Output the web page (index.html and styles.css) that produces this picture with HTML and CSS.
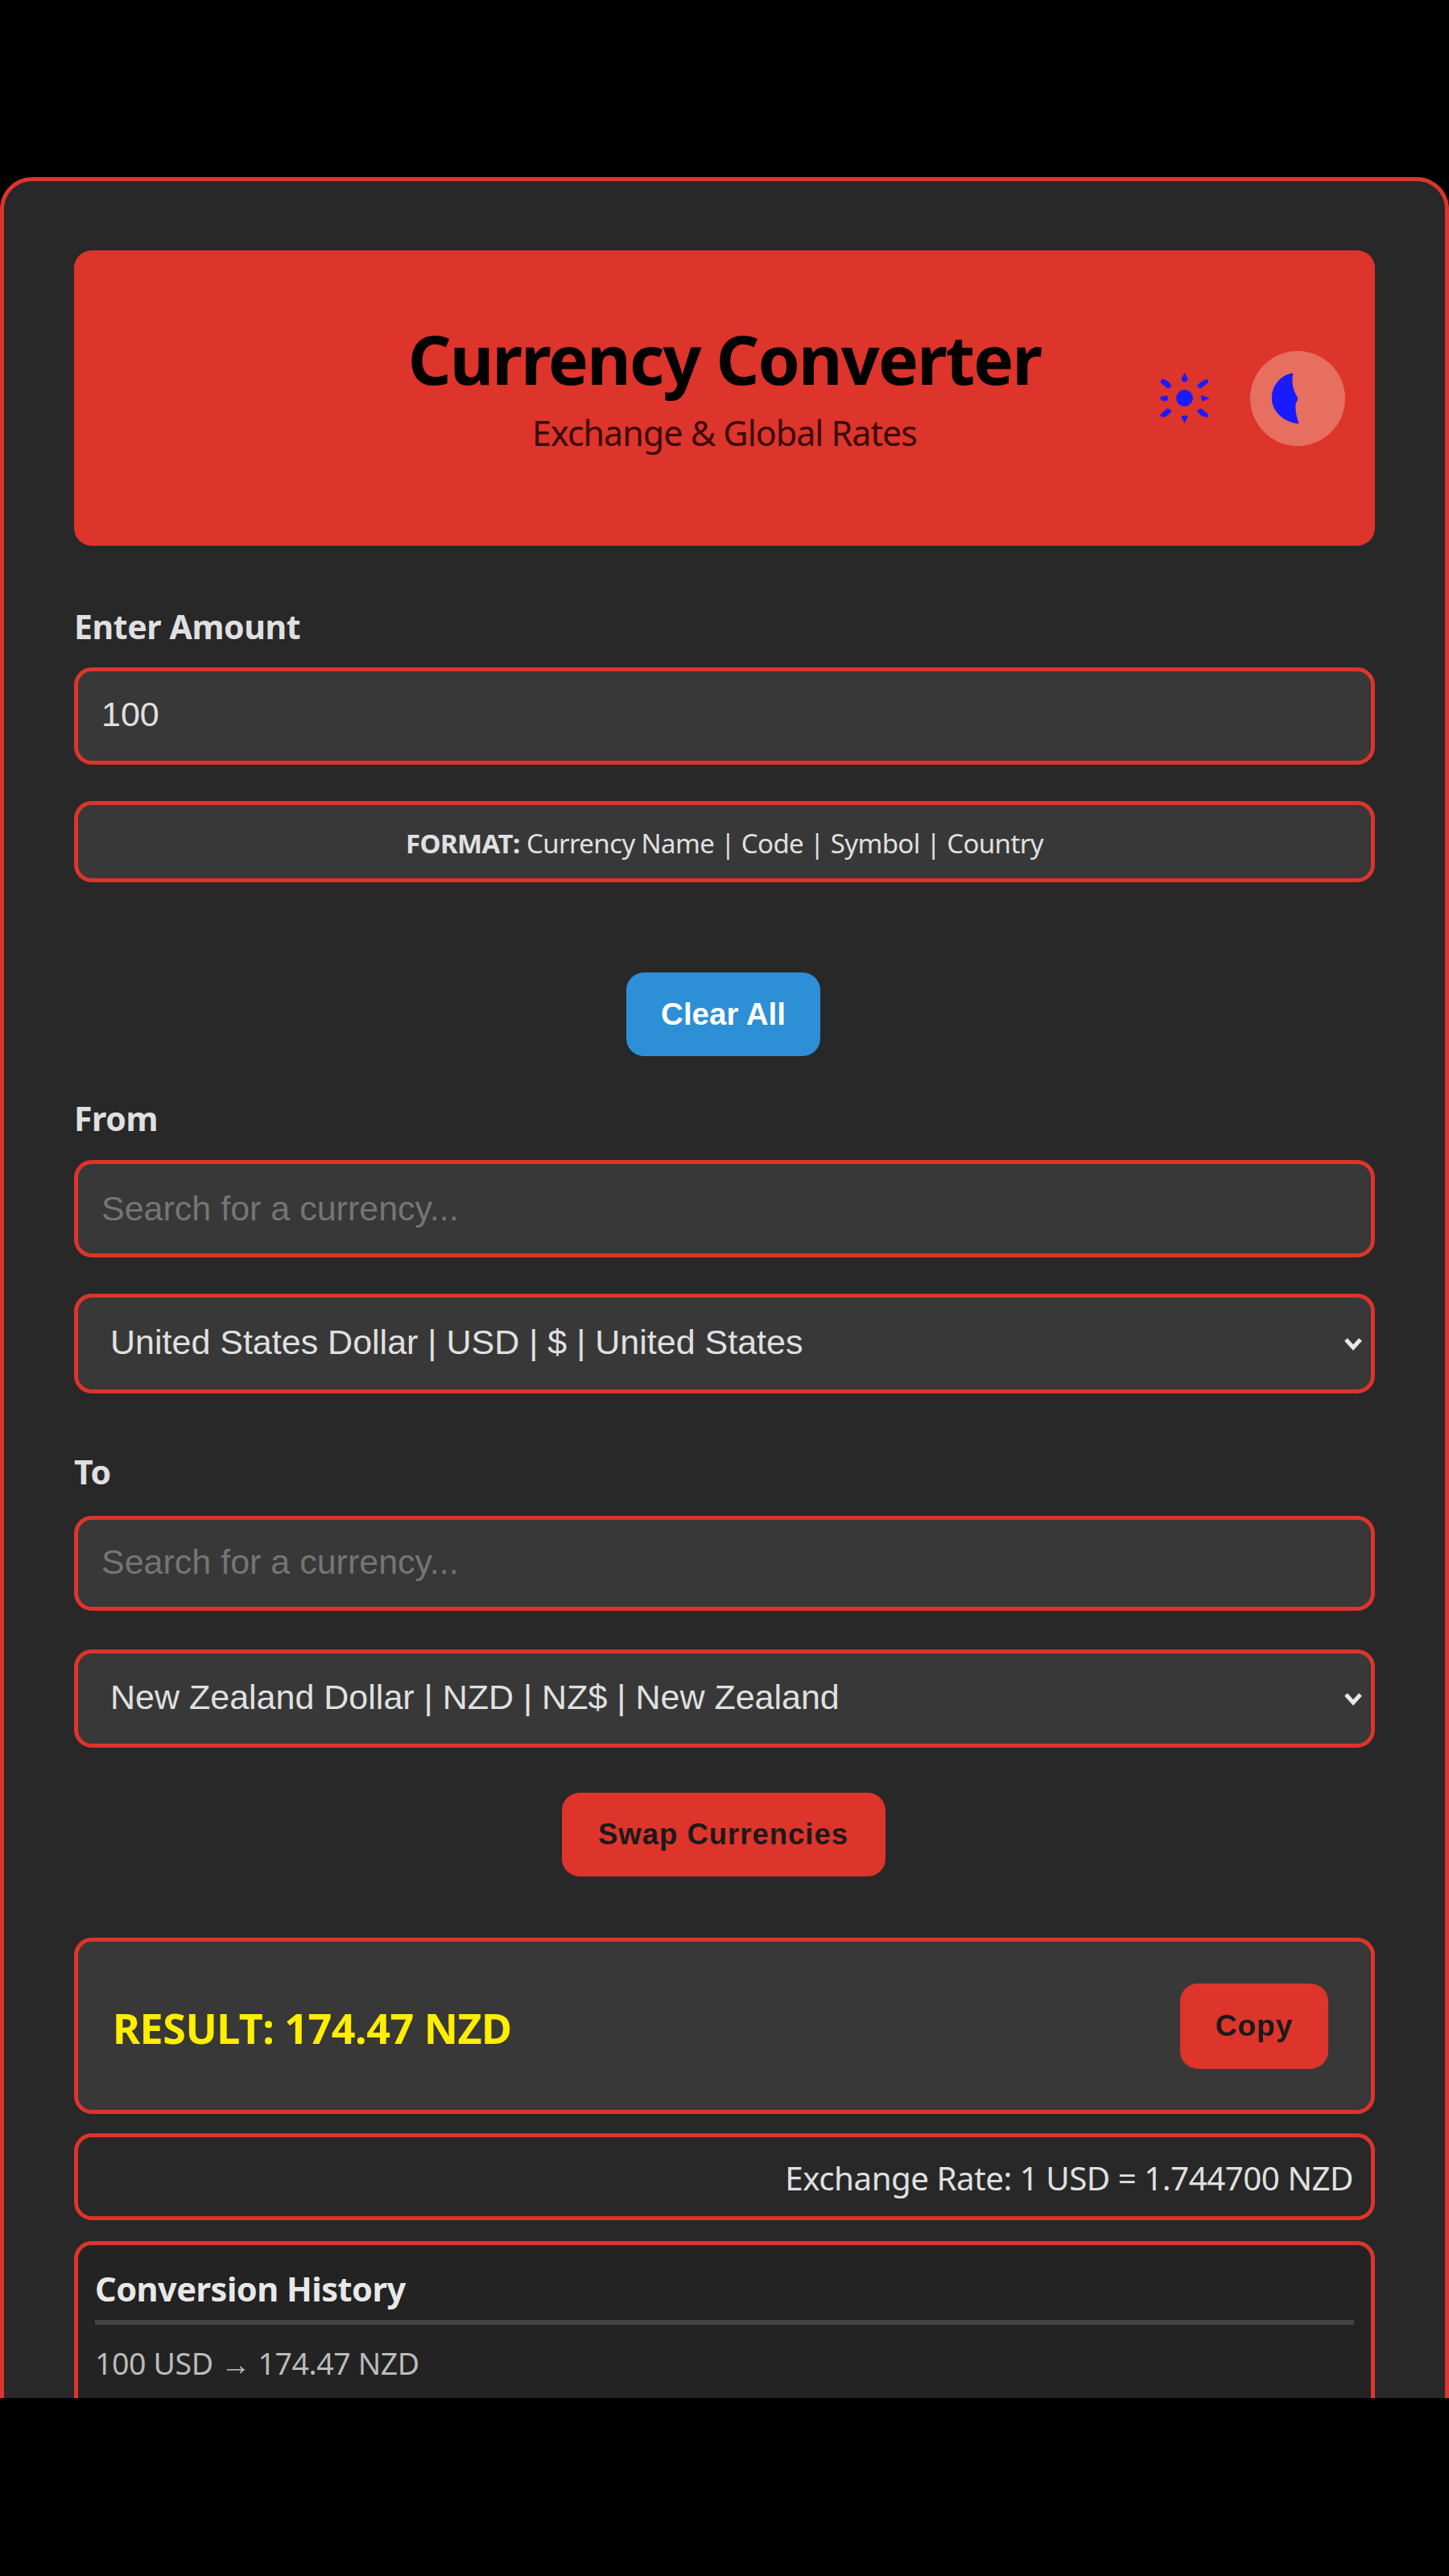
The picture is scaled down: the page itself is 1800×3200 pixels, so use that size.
FILE: index.html
```html
<!DOCTYPE html>
<html lang="en">
<head>
    <meta charset="UTF-8">
    <title>Currency Converter</title>
    <link rel="stylesheet" href="styles.css">
</head>
<body>
    <div class="frame">
        <div class="container">
            <div class="header">
                <div class="header-text">
                    <h1 class="title">Currency Converter</h1>
                    <div class="subtitle">Exchange &amp; Global Rates</div>
                </div>
                <div class="theme-controls">
                    <svg class="sun-icon" viewBox="183 188 182 188" aria-hidden="true">
                        <circle cx="274" cy="282" r="30"/>
                        <path d="M274 190 L285 210 Q283 221 274 222 Q264 221 263 210 Z"/>
                        <path d="M358 213 Q364 218 361 223 L336 245 Q326 245 322 236 Q332 220 358 213 Z"/>
                        <path d="M337 273 L365 283 L340 293 Q335 283 337 273 Z"/>
                        <path d="M322 330 Q328 322 337 322 L362 344 Q362 352 355 352 Q332 350 322 330 Z"/>
                        <path d="M263 350 Q274 344 285 350 L274 374 Z"/>
                        <path d="M225 330 Q215 350 192 352 Q184 350 185 344 L208 322 Q220 322 225 330 Z"/>
                        <path d="M185 278 L210 274 Q213 283 210 291 L192 292 Q184 285 185 278 Z"/>
                        <path d="M225 235 Q220 245 210 245 L186 224 Q184 216 194 212 Q216 220 225 235 Z"/>
                    </svg>
                    <button class="theme-toggle" aria-label="Toggle theme">
                        <svg class="moon-icon" viewBox="517 105 356 356" aria-hidden="true">
                            <path d="M672 188 C630 198 598 235 598 282 C598 330 640 372 700 378 C690 350 685 325 688 300 Q698 288 694 278 C680 255 670 225 678 190 Z"/>
                        </svg>
                    </button>
                </div>
            </div>

            <label class="field-label label-amount">Enter Amount</label>
            <input class="field field-amount" type="text" value="100">
            <div class="format-note"><b>FORMAT:</b> Currency Name | Code | Symbol | Country</div>

            <div class="btn-row row-clear"><button class="btn btn-clear">Clear All</button></div>

            <label class="field-label label-from">From</label>
            <input class="field" type="text" placeholder="Search for a currency...">
            <select class="field field-select">
                <option>United States Dollar | USD | $ | United States</option>
            </select>

            <label class="field-label label-to">To</label>
            <input class="field field-short" type="text" placeholder="Search for a currency...">
            <select class="field field-select field-select-short">
                <option>New Zealand Dollar | NZD | NZ$ | New Zealand</option>
            </select>

            <div class="btn-row row-swap"><button class="btn btn-swap">Swap Currencies</button></div>

            <div class="result-box">
                <div class="result-text">RESULT: 174.47 NZD</div>
                <button class="btn btn-copy">Copy</button>
            </div>
            <div class="rate-box">Exchange Rate: 1 USD = 1.744700 NZD</div>

            <div class="history">
                <div class="history-title">Conversion History</div>
                <div class="history-item">100 USD → 174.47 NZD</div>
            </div>
        </div>
    </div>
</body>
</html>
```

FILE: styles.css
```css
* { box-sizing: border-box; }
html, body { background: #000; }
body { margin: 0; height: 3200px; overflow: hidden; font-family: "Noto Sans", sans-serif; color: #e0e0e0; }

.frame { margin-top: 220px; height: 2759px; overflow: hidden; }
.container { background: #282828; border: 5px solid #dd342c; border-radius: 40px; padding: 86px 87px 60px; min-height: 3000px; }

.header { display: flex; height: 367px; background: #dd342c; border-radius: 22px; position: relative; align-items: center; justify-content: center; }
.header-text { text-align: center; margin-top: -28px; }
.title { margin: 0; font-size: 84px; line-height: 100px; font-weight: 700; color: #000; letter-spacing: -1.9px; }
.subtitle { font-size: 43px; line-height: 56px; color: #3a0a08; margin-top: 14px; letter-spacing: -1px; }
.theme-controls { position: absolute; right: 37px; top: 0; bottom: 0; display: flex; align-items: center; gap: 51px; }
.sun-icon { width: 61px; height: 63px; fill: #1a1aff; stroke: #1a1aff; stroke-width: 2; }
.theme-toggle { width: 118px; height: 118px; padding: 0; border: none; border-radius: 50%; background: #e66f60; }
.moon-icon { display: block; width: 118px; height: 118px; fill: #1a1aff; }

.field-label { display: block; font-size: 41px; line-height: 54px; font-weight: 700; color: #e0e0e0; letter-spacing: -0.4px; }
.label-amount { margin-top: 73px; margin-bottom: 24px; }
.label-from { margin-top: 50px; margin-bottom: 25px; }
.label-to { margin-top: 70px; margin-bottom: 28px; }

.field { display: block; width: 100%; height: 121px; padding: 0 29px; background: #383838; border: 5px solid #dd342c; border-radius: 22px; font-family: "Liberation Sans", Arial, sans-serif; font-size: 43px; color: #e0e0e0; outline: none; }
.field::placeholder { color: #757575; }
.field-amount { padding-bottom: 4px; }
.field-short { height: 118px; padding-bottom: 3px; }
.field-select { margin-top: 45px; height: 124px; padding: 0 40px 4px; appearance: none; background-image: url("data:image/svg+xml,%3Csvg xmlns='http://www.w3.org/2000/svg' width='24' height='18'%3E%3Cpath d='M3 4 L12 14 L21 4' fill='none' stroke='%23e8e8e8' stroke-width='5'/%3E%3C/svg%3E"); background-repeat: no-repeat; background-position: right 10px center; }
.field-select-short { margin-top: 48px; height: 122px; }

.format-note { margin-top: 45px; height: 101px; display: flex; align-items: center; justify-content: center; gap: 0.25em; padding-top: 3px; background: #383838; border: 5px solid #dd342c; border-radius: 22px; font-size: 33px; letter-spacing: -0.6px; color: #e0e0e0; }

.btn-row { display: flex; justify-content: center; padding-right: 3px; }
.row-clear { margin-top: 112px; }
.row-swap { margin-top: 56px; }
.btn { border: none; border-radius: 22px; font-family: "Liberation Sans", Arial, sans-serif; font-weight: 700; cursor: pointer; }
.btn-clear { width: 241px; height: 104px; background: #2d8fd5; color: #fff; font-size: 38.5px; }
.btn-swap { width: 402px; height: 104px; background: #dd342c; color: #1a1a1a; font-size: 36.5px; letter-spacing: 1px; }
.btn-copy { width: 184px; height: 106px; background: #dd342c; color: #1a1a1a; font-size: 37px; letter-spacing: 1px; }

.result-box { margin-top: 76px; height: 219px; display: flex; align-items: center; justify-content: space-between; padding: 0 53px 0 43px; background: #383838; border: 5px solid #dd342c; border-radius: 22px; }
.result-text { font-size: 52px; font-weight: 700; color: #ffee00; letter-spacing: -0.5px; margin-top: 4px; }
.rate-box { margin-top: 24px; height: 108px; display: flex; align-items: center; justify-content: flex-end; padding: 2px 22px 0; border: 5px solid #dd342c; border-radius: 22px; font-size: 40.3px; letter-spacing: -0.5px; color: #e0e0e0; }

.history { margin-top: 26px; height: 400px; background: #232323; border: 5px solid #dd342c; border-radius: 22px; padding: 26px 21px; }
.history-title { font-size: 41.5px; line-height: 56px; font-weight: 700; letter-spacing: -0.5px; color: #e8e8e8; padding-bottom: 11px; border-bottom: 6px solid #444; }
.history-item { margin-top: 23px; font-size: 37.5px; line-height: 50px; color: #bbb; letter-spacing: -0.4px; }
```
